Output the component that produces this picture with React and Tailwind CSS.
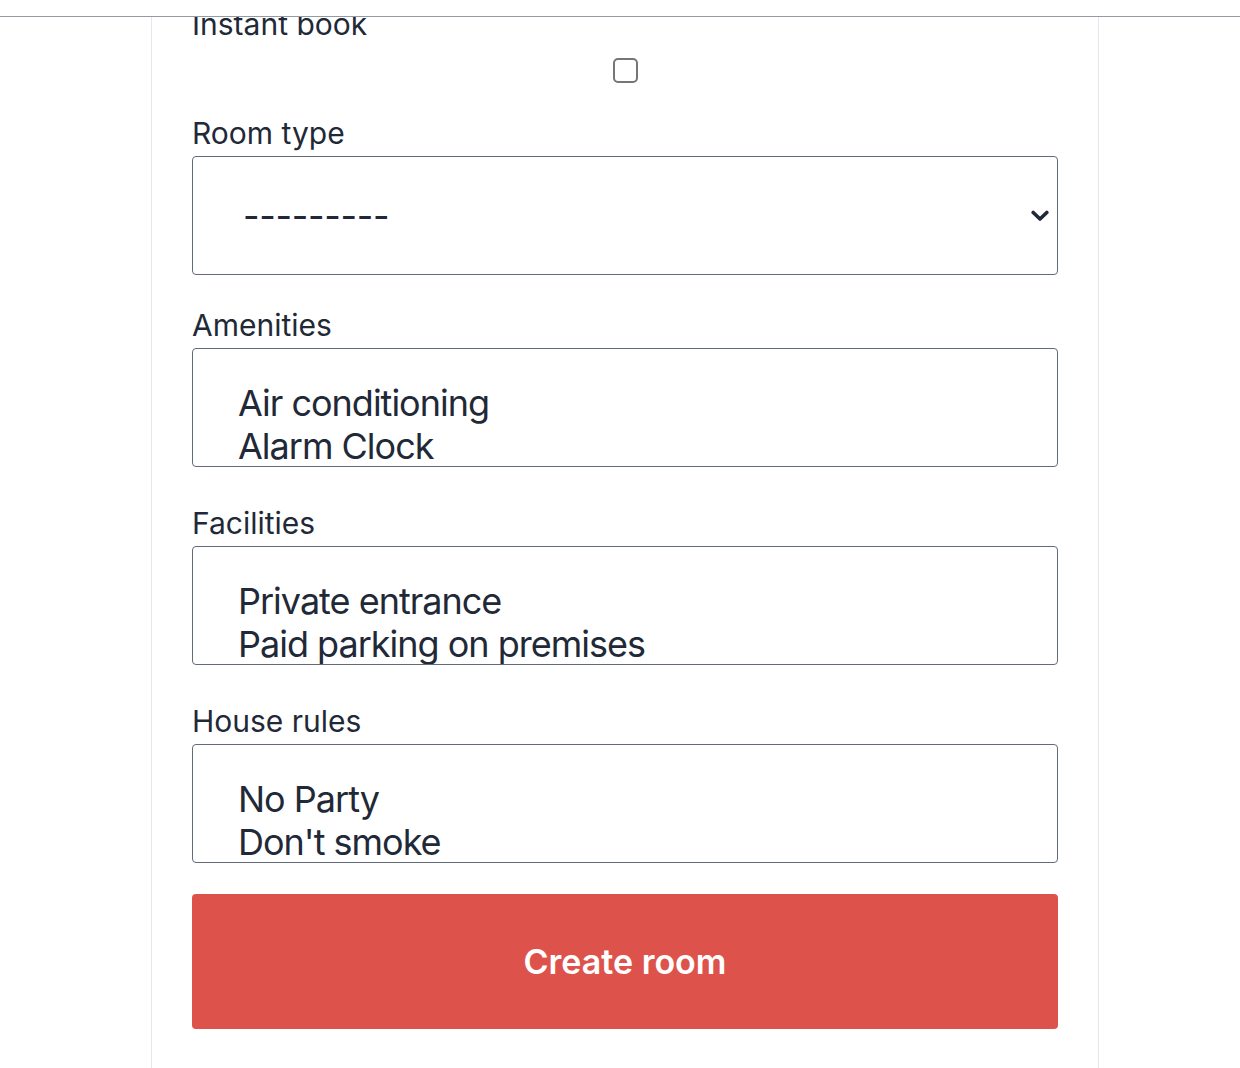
import React from "react";

function Label({ children, className = "" }) {
  return (
    <div className={"text-[30px] leading-9 text-[#1f2937] " + className}>
      {children}
    </div>
  );
}

function MultiBox({ items }) {
  return (
    <div className="h-[119px] overflow-hidden rounded border border-[#646b78] bg-white pl-[45px] pt-[33px] text-[36px] leading-[43px] tracking-[-1px] text-[#1f2937]">
      {items.map((it) => (
        <div key={it} className="whitespace-nowrap">
          {it}
        </div>
      ))}
    </div>
  );
}

export default function App() {
  return (
    <div className="h-[1068px] overflow-hidden bg-white font-['Inter','Liberation_Sans',sans-serif]">
      <div className="h-[17px] border-b border-[#9599a1] bg-white" />
      <div className="h-[1051px] overflow-hidden">
        <div className="-mt-[11px] ml-[151px] w-[948px] border-x border-[#e5e7eb] px-10 pb-[80px]">
          <Label>Instant book</Label>
          <div className="mt-4 flex justify-center">
            <div className="h-[25px] w-[25px] rounded-[5px] border-2 border-[#767676] bg-white" />
          </div>

          <Label className="mt-8 mb-[5px]">Room type</Label>
          <div className="flex h-[119px] items-center justify-between rounded border border-[#646b78] bg-white pl-[50px] pr-[8px] text-[36px] text-[#1f2937]">
            <span className="tracking-[-0.3px]">---------</span>
            <svg width="18" height="12" viewBox="0 0 18 12">
              <polyline
                points="2.2,2.5 9,9 15.8,2.5"
                fill="none"
                stroke="#1f2937"
                strokeWidth="3.6"
                strokeLinecap="round"
                strokeLinejoin="round"
              />
            </svg>
          </div>

          <Label className="mt-[32px] mb-[5px]">Amenities</Label>
          <MultiBox items={["Air conditioning", "Alarm Clock"]} />

          <Label className="mt-[38px] mb-[5px]">Facilities</Label>
          <MultiBox items={["Private entrance", "Paid parking on premises"]} />

          <Label className="mt-[38px] mb-[5px]">House rules</Label>
          <MultiBox items={["No Party", "Don't smoke"]} />

          <button className="mt-[31px] flex h-[135px] w-full items-center justify-center rounded bg-[#de524c] text-[34px] font-semibold text-white">
            Create room
          </button>
        </div>
      </div>
    </div>
  );
}
